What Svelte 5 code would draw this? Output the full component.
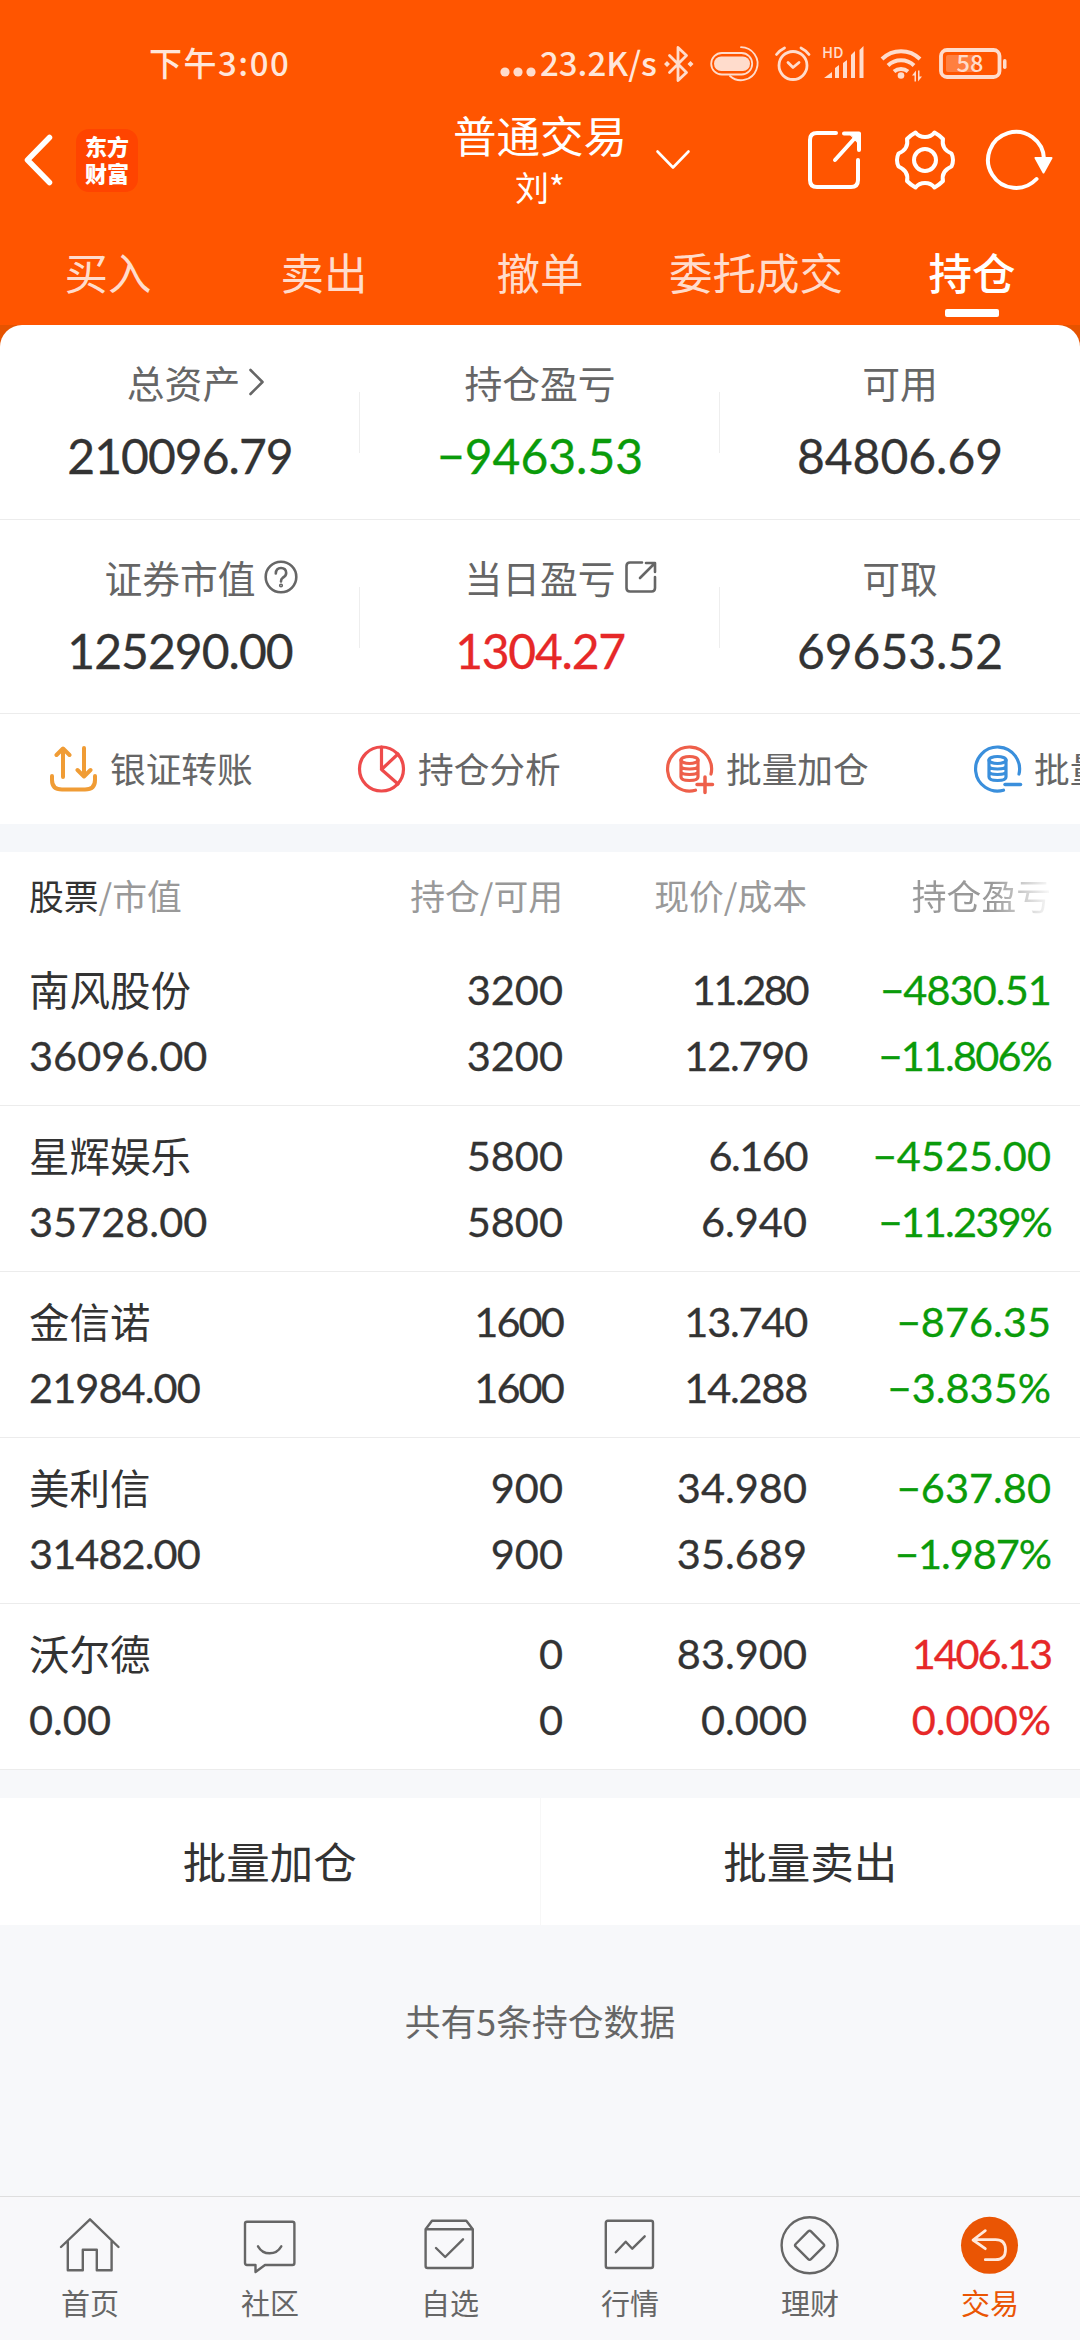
<script>
  const tabs = ["买入", "卖出", "撤单", "委托成交", "持仓"];
  let activeTab = "持仓";

  const assets = [
    [
      { label: "总资产", value: "210096.79", icon: "chevron" },
      { label: "持仓盈亏", value: "−9463.53", color: "down" },
      { label: "可用", value: "84806.69" },
    ],
    [
      { label: "证券市值", value: "125290.00", icon: "help" },
      { label: "当日盈亏", value: "1304.27", color: "up", icon: "share" },
      { label: "可取", value: "69653.52" },
    ],
  ];

  const actions = [
    { icon: "transfer", label: "银证转账" },
    { icon: "pie", label: "持仓分析" },
    { icon: "add", label: "批量加仓" },
    { icon: "reduce", label: "批量减仓" },
  ];

  const stocks = [
    { name: "南风股份", market: "36096.00", hold: "3200", usable: "3200", price: "11.280", cost: "12.790", profit: "−4830.51", rate: "−11.806%" },
    { name: "星辉娱乐", market: "35728.00", hold: "5800", usable: "5800", price: "6.160", cost: "6.940", profit: "−4525.00", rate: "−11.239%" },
    { name: "金信诺", market: "21984.00", hold: "1600", usable: "1600", price: "13.740", cost: "14.288", profit: "−876.35", rate: "−3.835%" },
    { name: "美利信", market: "31482.00", hold: "900", usable: "900", price: "34.980", cost: "35.689", profit: "−637.80", rate: "−1.987%" },
    { name: "沃尔德", market: "0.00", hold: "0", usable: "0", price: "83.900", cost: "0.000", profit: "1406.13", rate: "0.000%" },
  ];

  const navs = [
    { icon: "home", label: "首页" },
    { icon: "chat", label: "社区" },
    { icon: "box", label: "自选" },
    { icon: "chart", label: "行情" },
    { icon: "money", label: "理财" },
    { icon: "trade", label: "交易", active: true },
  ];

  // the digit 1 is set narrow, so strings with many of them are tightened
  const spacing = (text) => {
    const ones = text.split("1").length - 1;
    return (-0.18 * ones) / text.length + "em";
  };
</script>

<div class="page">
  <header>
    <div class="status">
      <span class="time">下午3:00</span>
      <div class="status-right">
        <svg class="dots" width="36" height="34" viewBox="0 0 36 34">
          <circle cx="5" cy="25" r="4.6" />
          <circle cx="18" cy="25" r="4.6" />
          <circle cx="31" cy="25" r="4.6" />
        </svg>
        <span class="speed">23.2K/s</span>
        <svg class="bt" width="30" height="36" viewBox="0 0 30 36">
          <path class="line" d="M5.500 9.500l17 17l-8.500 8v-33l8.500 8l-17 17" />
          <path d="M3 15l3 3l-3 3l-3-3zM26.500 15l3 3l-3 3l-3-3z" />
        </svg>
        <svg class="pill" width="50" height="36" viewBox="0 0 50 36">
          <rect class="line thin" x="1.200" y="7" width="41" height="21.500" rx="10.700" />
          <rect x="4" y="10.500" width="36" height="14.500" rx="7.200" />
          <path class="line thin" d="M31 1.200a16.500 16.500 0 1 1-11 28.800" />
        </svg>
        <svg class="alarm" width="36" height="36" viewBox="0 0 36 36">
          <circle class="line" cx="18" cy="19.500" r="14" />
          <path class="line" d="M13 16.500l5 5l6-5" />
          <path class="line" d="M1.500 8.500q3-4 8-6.500M34 8.500q-3-4-8-6.500" />
        </svg>
        <svg class="signal" width="43" height="36" viewBox="0 0 43 36">
          <text x="0" y="12" font-size="15">HD</text>
          <path d="M2 32l8-6v6zM13 22l4-3v13h-4zM21 17l4-3v18h-4zM29 9l4-4v27h-4zM37.500 4l4-4v32h-4z" />
        </svg>
        <svg class="wifi" width="43" height="36" viewBox="0 0 43 36">
          <path class="line fat" d="M2 13a27 27 0 0 1 38 0M8 19.500a19 19 0 0 1 26 0M14 25.500a11 11 0 0 1 14 0" />
          <circle cx="21" cy="29.500" r="3.300" />
          <path d="M32 29.500l4-5v11h-1.500v-6zM38 35.500v-11h1.500v6h2.500z" />
        </svg>
        <svg class="battery" width="68" height="32" viewBox="0 0 68 32">
          <rect class="line thick" x="2" y="2" width="58.500" height="27" rx="6" />
          <rect class="level" x="7" y="7" width="29" height="17" rx="2" />
          <rect x="64" y="11" width="3.500" height="10" rx="1.700" />
          <text x="17.500" y="24" font-size="23.500">58</text>
        </svg>
      </div>
    </div>

    <div class="titlebar">
      <div class="left">
        <svg width="30" height="52" viewBox="0 0 30 52">
          <path d="M26.500 3.500L4.500 26l22 22.500" stroke-width="5.500" />
        </svg>
        <div class="logo"><span>东方</span><span>财富</span></div>
      </div>
      <div class="title">
        <h1>普通交易</h1>
        <p>刘*</p>
      </div>
      <div class="right">
        <svg class="caret" width="34" height="20" viewBox="0 0 34 20">
          <path d="M1.500 1.500L17 17.500L32.500 1.500" stroke-width="2.600" />
        </svg>
        <svg width="56" height="60" viewBox="0 0 56 60">
          <path d="M29 3H10Q3 3 3 10v40q0 7 7 7h34q7 0 7-7V30" stroke-width="4" />
          <path d="M37 3.500h15V20M52 3.500L28 30" stroke-width="4" />
          <path d="M42 3h10v11z" fill="#fff" />
        </svg>
        <svg class="gear" width="60" height="60" viewBox="0 0 60 60">
          <path d="M12 9Q16 5 20.500 2.500Q24 7 30 7T39.500 2.500Q44 5 48 9Q46 19 56.500 23.500Q59.500 30 56.500 36.500Q46 41 48 51Q44 55 39.500 57.500Q36 53 30 53T20.500 57.500Q16 55 12 51Q14 41 3.500 36.500Q.5 30 3.500 23.500Q14 19 12 9Z" stroke-width="4" />
          <circle cx="30" cy="30" r="11" stroke-width="4" />
        </svg>
        <svg width="66" height="60" viewBox="0 0 66 60">
          <path d="M49.500 49A28 28 0 1 1 57 29" stroke-width="4" />
          <path d="M48.500 28h16l-8 14.500z" fill="#fff" stroke-width="2" />
        </svg>
      </div>
    </div>

    <nav class="tabs">
      {#each tabs as tab}
        <button class="tab" class:active={tab === activeTab} on:click={() => (activeTab = tab)}>
          {tab}
        </button>
      {/each}
    </nav>
  </header>

  <div class="panel-back">
    <section class="assets">
      {#each assets as row}
        <div class="asset-row">
          {#each row as item}
            <div class="asset">
              <div class="asset-label {item.icon}">
                {item.label}
                {#if item.icon === "chevron"}
                  <svg width="18" height="30" viewBox="0 0 18 30">
                    <path d="M2.500 3L14.500 15L2.500 27" />
                  </svg>
                {:else if item.icon === "help"}
                  <svg width="34" height="34" viewBox="0 0 34 34">
                    <circle cx="17" cy="17" r="15.300" />
                    <path d="M11.800 13.500Q12 8 17 8T22.200 13Q22.200 16 18.500 18Q17 19 17 21.500" />
                    <circle cx="17" cy="25.500" r=".8" />
                  </svg>
                {:else if item.icon === "share"}
                  <svg width="32" height="32" viewBox="0 0 32 32">
                    <path d="M17 1.500H5Q1.500 1.500 1.500 5v22q0 3.500 3.500 3.500h21.500q3.500 0 3.500-3.500V16M21 2h9v9M29.500 2.500L15 17" />
                  </svg>
                {/if}
              </div>
              <div class="asset-value num {item.color}" style:letter-spacing={spacing(item.value)}>{item.value}</div>
            </div>
          {/each}
        </div>
      {/each}
    </section>
  </div>

  <section class="actions">
    {#each actions as action}
      <div class="action">
        <svg class={action.icon} width="48" height="48" viewBox="0 0 48 48">
          {#if action.icon === "transfer"}
            <path d="M13 32V4M6.500 10L13 3.500L19.500 10M34 3v28M27.500 25L34 31.500L40.500 25M2 31v4q0 9.500 10 9.500h23q10 0 10-9.500v-4" />
          {:else if action.icon === "pie"}
            <circle cx="23.500" cy="24" r="22" />
            <path d="M23.500 2v22.500L40 9M23.500 24.500L40 39" />
          {:else}
            <path d="M29.500 45.200A22 22 0 1 1 45 29" />
            <ellipse cx="23.500" cy="15" rx="8.500" ry="3.500" />
            <path d="M15 15v17q0 3.500 8.500 3.500T32 32V15M15 21q0 3 8.500 3T32 21M15 26.500q0 3 8.500 3T32 26.500" />
            {#if action.icon === "add"}
              <path class="sign" d="M31 39.500h15.500M39 32v15.500" />
            {:else}
              <path class="sign" d="M31 39.500h15.500" />
            {/if}
          {/if}
        </svg>
        <span>{action.label}</span>
      </div>
    {/each}
  </section>

  <section class="stocks">
    <div class="stock-head">
      <span><b>股票</b>/市值</span>
      <span>持仓/可用</span>
      <span>现价/成本</span>
      <span class="fade">持仓盈亏</span>
    </div>
    {#each stocks as s}
      <div class="stock" class:down={s.profit.startsWith("−")} class:up={!s.profit.startsWith("−")}>
        <span class="name">{s.name}</span>
        {#each [s.hold, s.price, s.profit, s.market, s.usable, s.cost, s.rate] as text}
          <span class="num" style:letter-spacing={spacing(text)}>{text}</span>
        {/each}
      </div>
    {/each}
  </section>

  <section class="batch">
    <button>批量加仓</button>
    <button>批量卖出</button>
  </section>

  <p class="summary">共有5条持仓数据</p>

  <footer>
    {#each navs as nav}
      <div class="nav-item" class:active={nav.active}>
        <svg width="60" height="60" viewBox="0 0 60 60">
          {#if nav.icon === "home"}
            <path d="M1 31L30 3.300L58.500 31M7.800 25.500v28.800h15V33.700h14v20.600h14.800V25.500" />
          {:else if nav.icon === "chat"}
            <path d="M7 5.700h45.400q2 0 2 2V47q0 2-2 2H25l-9.500 7v-7H7q-2 0-2-2V7.700q0-2 2-2z" />
            <path d="M18 30.300Q22 37.300 29.600 37.300T41.300 30.300" />
          {:else if nav.icon === "box"}
            <path d="M5.600 13.300L12 4.700h34.300l6.500 8.600V50q0 2-2 2H7.600q-2 0-2-2zh47.200" />
            <path d="M16 32l9.200 9L43 23.300" />
          {:else if nav.icon === "chart"}
            <rect x="5.800" y="4.700" width="47.200" height="47.300" rx="2" />
            <path d="M15.800 36.300l9.900-10.600l6.600 7L44.700 20.300" />
          {:else if nav.icon === "money"}
            <circle cx="29.600" cy="29.300" r="28" />
            <path d="M28.200 15.400q1.400-1.400 2.800 0L43.500 28q1.300 1.300 0 2.600L31 43.200q-1.400 1.400-2.800 0L15.700 30.600q-1.300-1.300 0-2.600z" />
          {:else}
            <circle class="disc" cx="29.500" cy="29.300" r="28.500" />
            <path class="arrow" d="M25.300 14.700L13 24l12.300 8.700M14 23.700h21.500q10 0 10 10t-10 10H25.300" />
          {/if}
        </svg>
        <span>{nav.label}</span>
      </div>
    {/each}
  </footer>
</div>

<style>
  :global(body) {
    background-color: #f7f8fa;
  }

  .page {
    width: 1080px;
    height: 2340px;
    overflow: hidden;

    display: flex;
    flex-direction: column;

    font-family: "Noto Sans CJK SC", sans-serif;
    color: #333;
  }

  h1,
  p {
    margin: 0;
    font-weight: 400;
  }

  button {
    border: 0;
    padding: 0;
    font-family: inherit;
    color: inherit;
    background-color: transparent;
  }

  svg {
    display: block;
    flex-shrink: 0;
    overflow: visible;
    fill: none;
    stroke-linecap: round;
    stroke-linejoin: round;
  }

  .num {
    font-family: Lato, "Noto Sans CJK SC", sans-serif;
    -webkit-text-stroke: 0.3px currentColor;
  }

  header {
    height: 325px;
    background-color: #ff5500;
    color: #fff;
  }

  .status {
    height: 88px;
    padding: 20px 73px 0 149px;

    display: flex;
    justify-content: space-between;
    align-items: center;

    font-size: 33px;
    font-weight: 500;
    line-height: 44px;
    color: #ffe6da;
  }

  .time {
    margin-bottom: 4px;
    letter-spacing: 1.5px;
  }

  .status-right {
    display: flex;
    align-items: center;
  }

  .status svg {
    fill: #ffdccc;
  }

  .status svg text {
    font-weight: 500;
  }

  .status .line {
    fill: none;
    stroke: #ffdccc;
    stroke-width: 2.8;
  }

  .status .thin {
    stroke-width: 1.8;
  }

  .status .thick {
    stroke-width: 3.8;
  }

  .status .fat {
    stroke-width: 4;
    stroke-linecap: butt;
  }

  .status .level {
    fill: #ff7f40;
  }

  .speed {
    width: 118px;
    margin-bottom: 4px;
    padding-left: 4px;
    white-space: nowrap;
  }

  .bt {
    margin-left: 6px;
  }

  .pill {
    margin-left: 16px;
  }

  .alarm {
    margin-left: 15px;
  }

  .signal {
    margin-left: 11px;
  }

  .wifi {
    margin-left: 15px;
  }

  .battery {
    margin-left: 16px;
  }

  .titlebar {
    height: 98px;

    display: grid;
    grid-template-columns: 1fr auto 1fr;
    align-items: center;
  }

  .titlebar svg {
    stroke: #fff;
  }

  .left {
    padding-left: 23px;

    display: flex;
    align-items: center;
  }

  .logo {
    width: 62px;
    height: 63px;
    margin-left: 23px;
    border-radius: 13px;
    background-color: #ff4400;

    display: flex;
    flex-direction: column;
    justify-content: center;
    align-items: center;

    font-size: 22px;
    font-weight: 900;
    line-height: 27px;
  }

  .logo span {
    margin-top: -1px;
    margin-bottom: 1px;
  }

  .title {
    text-align: center;
  }

  .title h1 {
    font-size: 43.5px;
    line-height: 54px;
  }

  .title p {
    font-size: 34px;
    line-height: 50px;
  }

  .right {
    padding-right: 27px;

    display: flex;
    align-items: center;
  }

  .caret {
    margin-left: 29px;
    margin-right: auto;
  }

  .gear {
    margin: 0 32px;
  }

  .tabs {
    height: 119px;
    display: flex;
  }

  .tab {
    position: relative;
    width: 216px;
    padding-top: 12px;

    font-size: 43.5px;
    line-height: 107px;
    color: #ffdccc;
  }

  .tab.active {
    font-weight: 500;
    color: #fff;
  }

  .tab.active:after {
    position: absolute;
    left: 81px;
    bottom: 8px;
    width: 54px;
    height: 8px;
    border-radius: 2px;

    content: "";
    background-color: #fff;
  }

  .panel-back {
    background-color: #e65300;
  }

  .assets {
    border-radius: 22px 22px 0 0;
    background-color: #fff;
  }

  .asset-row {
    height: 194px;
    border-bottom: 1px solid #ececec;
    box-sizing: border-box;

    display: flex;
  }

  .asset-row:first-child {
    height: 195px;
  }

  .asset {
    width: 360px;
    padding-top: 32px;
    box-sizing: border-box;
    text-align: center;

    background: linear-gradient(#eee, #eee) no-repeat 359px 67px / 1px 61px;
  }

  .asset:last-child {
    background: none;
  }

  .asset-label {
    height: 50px;

    display: flex;
    justify-content: center;
    align-items: center;

    font-size: 37.8px;
    line-height: 50px;
    color: #666;
  }

  .asset-label svg {
    stroke: #666;
    stroke-width: 2.6;
  }

  .asset-label.chevron svg {
    margin-left: 8px;
    margin-right: -33px;
  }

  .asset-label.help svg {
    margin-left: 8px;
    margin-right: -42px;
  }

  .asset-label.share svg {
    margin-left: 9px;
    margin-right: -41px;
  }

  .asset-value {
    margin-top: 17px;
    font-size: 48px;
    line-height: 64px;
  }

  .down,
  .stock.down .num:nth-child(4),
  .stock.down .num:nth-child(8) {
    color: #0a9b0a;
  }

  .up,
  .stock.up .num:nth-child(4),
  .stock.up .num:nth-child(8) {
    color: #e62828;
  }

  .actions {
    height: 110px;
    padding-left: 50px;
    border-bottom: 28px solid #f5f7fa;
    background-color: #fff;
    overflow: hidden;

    display: flex;
  }

  .action {
    width: 308px;
    flex-shrink: 0;

    display: flex;
    align-items: center;
    gap: 12px;

    font-size: 35.7px;
    color: #666;
    white-space: nowrap;
  }

  .action span {
    margin-bottom: 3px;
  }

  .action svg {
    stroke-width: 3.2;
  }

  .transfer {
    stroke: #f09c35;
  }

  .action svg.transfer {
    stroke-width: 4;
  }

  .pie {
    stroke: #ee4b4b;
  }

  .add {
    stroke: #ee5f4a;
  }

  .reduce {
    stroke: #3a8fdc;
  }

  .sign {
    stroke-width: 3.5;
  }

  .stocks {
    background-color: #fff;
  }

  .stock-head,
  .stock {
    padding: 0 29px;

    display: grid;
    grid-template-columns: 290px 244px 244px 244px;
    text-align: right;
  }

  .stock-head {
    height: 88px;
    font-size: 34.8px;
    line-height: 86px;
    color: #999;
  }

  .stock-head b {
    font-weight: 400;
    color: #333;
  }

  .stock-head span:first-child,
  .stock .name,
  .stock .num:nth-child(5) {
    text-align: left;
  }

  .fade {
    background: linear-gradient(90deg, #999 76%, #fff 101%);
    background-clip: text;
    -webkit-background-clip: text;
    color: transparent;
  }

  .stock {
    height: 132px;
    padding-top: 17px;
    padding-bottom: 16px;
    border-bottom: 1px solid #ececec;

    grid-template-rows: 66px 66px;

    font-size: 41.5px;
    line-height: 65px;
  }

  .stock.up,
  .stock.down {
    color: #333;
  }

  .name {
    font-size: 40.5px;
    line-height: 63px;
  }

  .batch {
    height: 127px;
    margin-top: 28px;
    background-color: #fff;

    display: flex;
  }

  .batch button {
    flex: 1;
    padding-bottom: 2px;
    font-size: 43.5px;
  }

  .batch button:first-child {
    border-right: 1px solid #f7f7f7;
  }

  .summary {
    margin-top: 70px;

    font-size: 35.8px;
    line-height: 50px;
    text-align: center;
    color: #666;
  }

  footer {
    height: 143px;
    margin-top: auto;
    border-top: 1px solid #dedede;
    background-color: #f8f8fa;

    display: flex;
  }

  .nav-item {
    width: 180px;
    padding-top: 19px;

    display: flex;
    flex-direction: column;
    align-items: center;

    font-size: 29px;
    line-height: 53px;
    color: #666;
  }

  .nav-item svg {
    stroke: #666;
    stroke-width: 2.4;
  }

  .nav-item.active {
    color: #ea5504;
  }

  .nav-item .disc {
    fill: #ea5504;
    stroke: none;
  }

  .nav-item .arrow {
    stroke: #ffe9dd;
    stroke-width: 2.8;
  }
</style>
